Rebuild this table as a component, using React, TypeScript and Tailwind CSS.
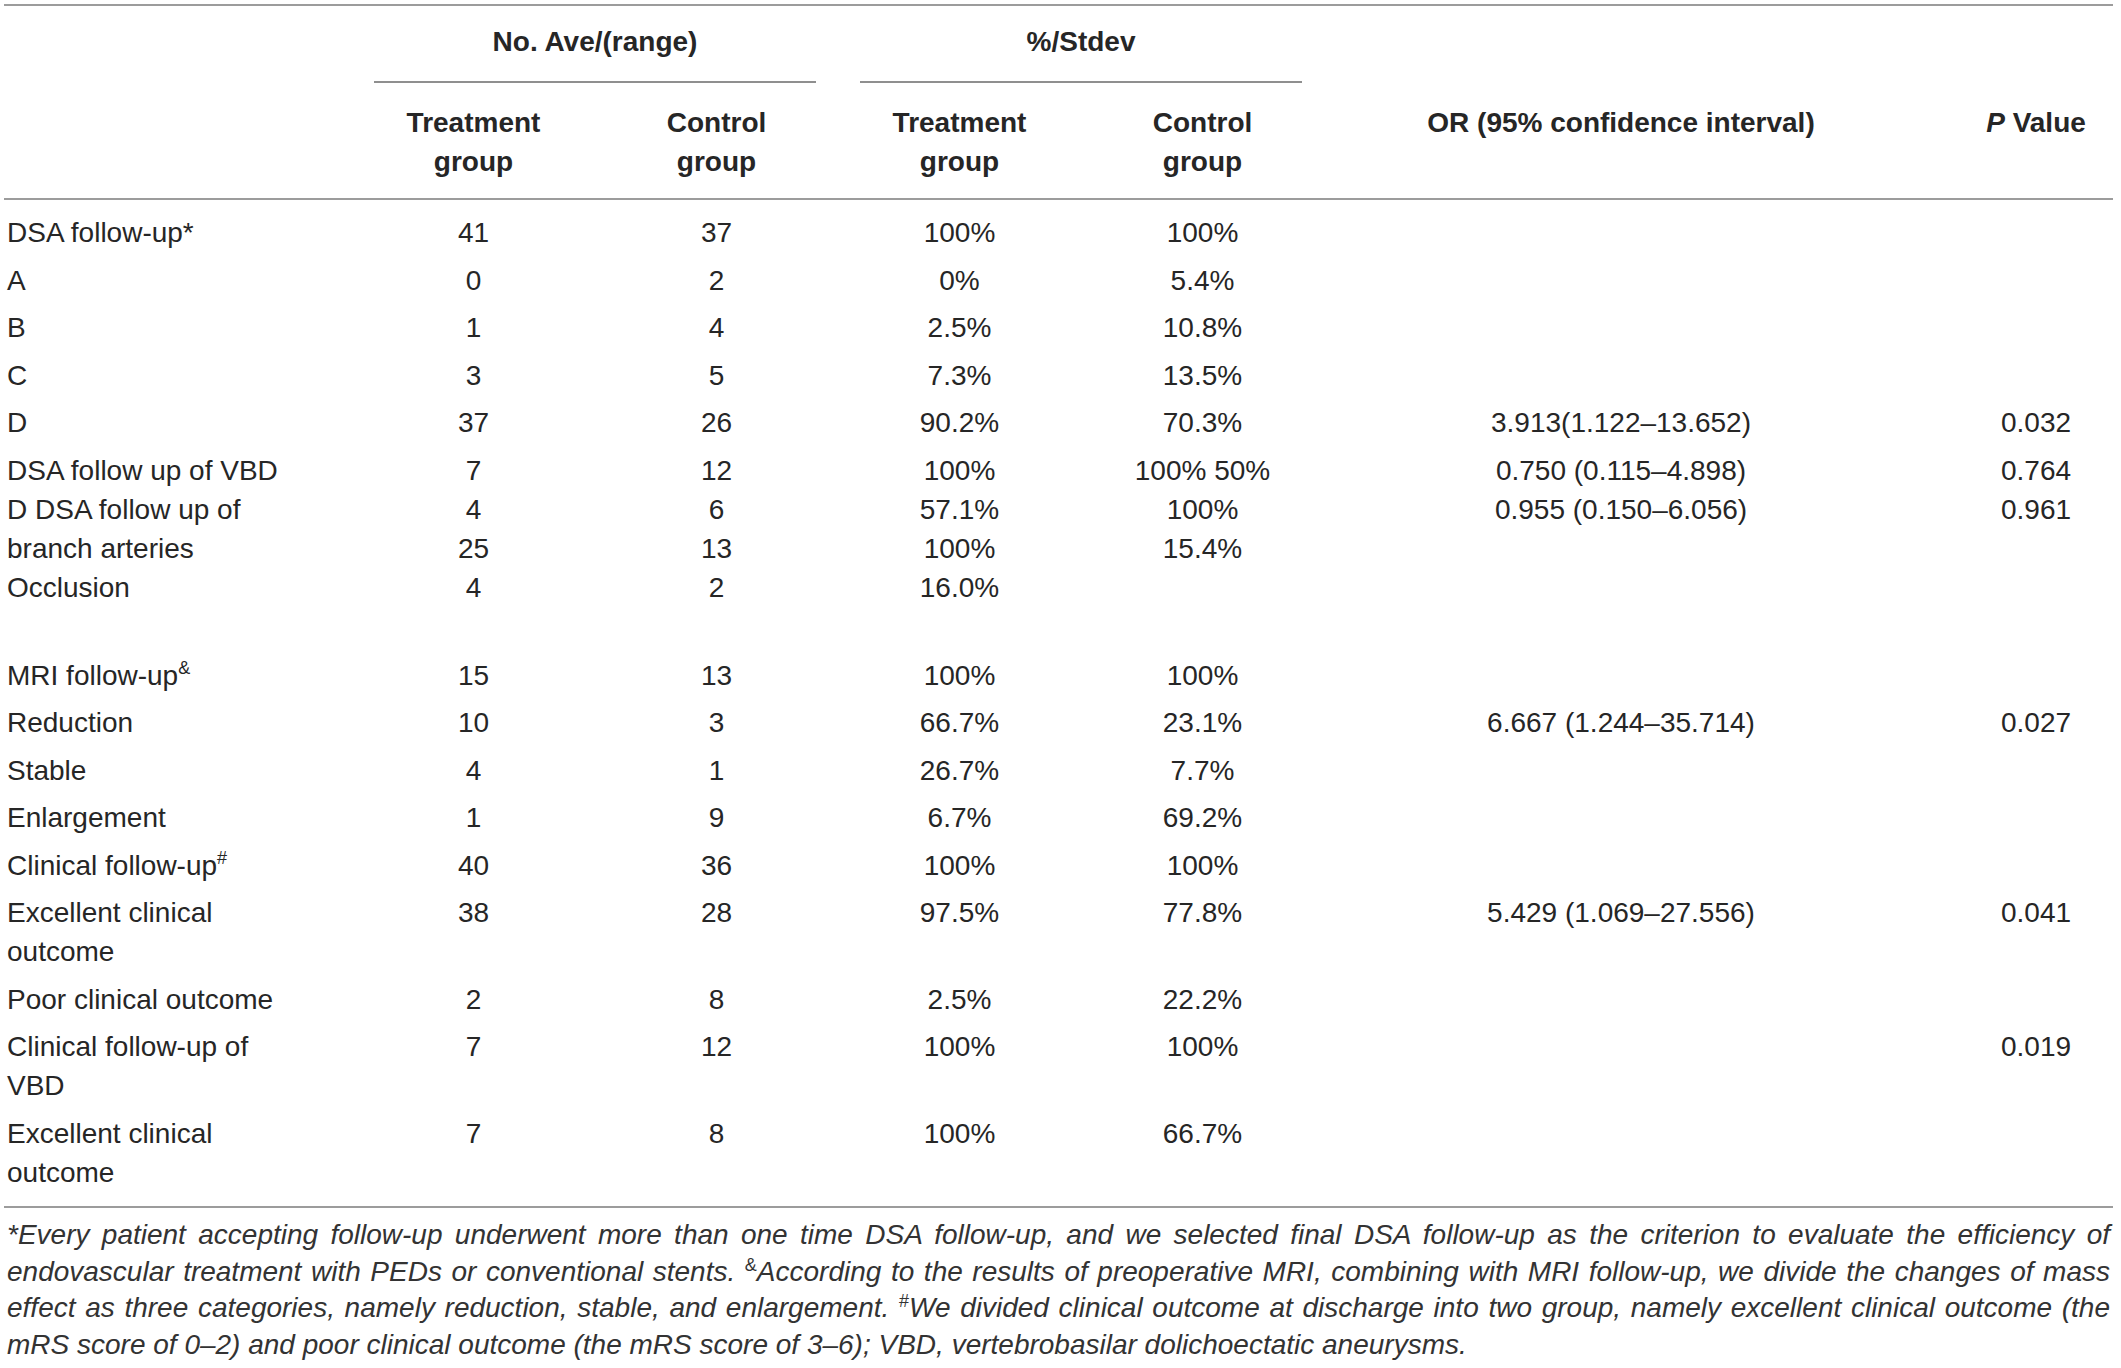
import React from "react"

type Row = {
  label: React.ReactNode
  cells: string[]
  or?: string
  p?: string
}

const grid = "grid grid-cols-[348px_243px_243px_243px_243px_594px_195px]"

const rowsTop: Row[] = [
  { label: "DSA follow-up*", cells: ["41", "37", "100%", "100%"] },
  { label: "A", cells: ["0", "2", "0%", "5.4%"] },
  { label: "B", cells: ["1", "4", "2.5%", "10.8%"] },
  { label: "C", cells: ["3", "5", "7.3%", "13.5%"] },
  { label: "D", cells: ["37", "26", "90.2%", "70.3%"], or: "3.913(1.122–13.652)", p: "0.032" },
]

const multi = {
  label: ["DSA follow up of VBD", "D DSA follow up of", "branch arteries", "Occlusion"],
  cols: [
    ["7", "4", "25", "4"],
    ["12", "6", "13", "2"],
    ["100%", "57.1%", "100%", "16.0%"],
    ["100% 50%", "100%", "15.4%", ""],
  ],
  or: ["0.750 (0.115–4.898)", "0.955 (0.150–6.056)", "", ""],
  p: ["0.764", "0.961", "", ""],
}

const sup = (s: string) => <sup className="text-[18px] relative -top-[11px]">{s}</sup>

const rowsBottom: Row[] = [
  { label: <>MRI follow-up{sup("&")}</>, cells: ["15", "13", "100%", "100%"] },
  { label: "Reduction", cells: ["10", "3", "66.7%", "23.1%"], or: "6.667 (1.244–35.714)", p: "0.027" },
  { label: "Stable", cells: ["4", "1", "26.7%", "7.7%"] },
  { label: "Enlargement", cells: ["1", "9", "6.7%", "69.2%"] },
  { label: <>Clinical follow-up{sup("#")}</>, cells: ["40", "36", "100%", "100%"] },
  { label: "Excellent clinical outcome", cells: ["38", "28", "97.5%", "77.8%"], or: "5.429 (1.069–27.556)", p: "0.041" },
  { label: "Poor clinical outcome", cells: ["2", "8", "2.5%", "22.2%"] },
  { label: "Clinical follow-up of VBD", cells: ["7", "12", "100%", "100%"], p: "0.019" },
  { label: "Excellent clinical outcome", cells: ["7", "8", "100%", "66.7%"] },
]

function BodyRow({ row }: { row: Row }) {
  return (
    <div className={`${grid} py-[4.25px]`}>
      <div className="pl-[3px] pr-[56px]">{row.label}</div>
      {row.cells.map((c, i) => (
        <div key={i} className="text-center">{c}</div>
      ))}
      <div className="text-center">{row.or ?? ""}</div>
      <div className="text-center pl-[41px]">{row.p ?? ""}</div>
    </div>
  )
}

function Lines({ items, className }: { items: string[]; className?: string }) {
  return (
    <div className={className}>
      {items.map((t, i) => (
        <div key={i} className="h-[39px]">{t}</div>
      ))}
    </div>
  )
}

const fsup = "text-[18px] not-italic relative -top-[10px]"

const footLines: React.ReactNode[] = [
  <>*Every patient accepting follow-up underwent more than one time DSA follow-up, and we selected final DSA follow-up as the criterion to evaluate the efficiency of</>,
  <>endovascular treatment with PEDs or conventional stents. <sup className={fsup}>&amp;</sup>According to the results of preoperative MRI, combining with MRI follow-up, we divide the changes of mass</>,
  <>effect as three categories, namely reduction, stable, and enlargement. <sup className={fsup}>#</sup>We divided clinical outcome at discharge into two group, namely excellent clinical outcome (the</>,
  <>mRS score of 0–2) and poor clinical outcome (the mRS score of 3–6); VBD, vertebrobasilar dolichoectatic aneurysms.</>,
]

export default function App() {
  return (
    <div className="w-[2121px] h-[1368px] bg-white overflow-hidden font-['Liberation_Sans',Arial,sans-serif] text-[#262626] text-[28px] leading-[39px]">
      <div className="ml-[4px] w-[2109px] pt-[4px]">
        {/* header */}
        <div className="border-t-2 border-[#9c9c9c]">
          <div className={`${grid} font-bold`}>
            <div />
            <div className="col-span-2 px-[22px]">
              <div className="text-center pt-[16px] pb-[20px] border-b-2 border-[#8f8f8f]">No. Ave/(range)</div>
            </div>
            <div className="col-span-2 px-[22px]">
              <div className="text-center pt-[16px] pb-[20px] border-b-2 border-[#8f8f8f]">%/Stdev</div>
            </div>
            <div />
            <div />
          </div>
          <div className={`${grid} font-bold pt-[20px] pb-[17px] border-b-2 border-[#9c9c9c]`}>
            <div />
            <div className="text-center">Treatment<br />group</div>
            <div className="text-center">Control<br />group</div>
            <div className="text-center">Treatment<br />group</div>
            <div className="text-center">Control<br />group</div>
            <div className="text-center">OR (95% confidence interval)</div>
            <div className="text-center pl-[41px]"><span className="italic">P</span> Value</div>
          </div>
        </div>

        {/* body */}
        <div className="pt-[9px] pb-[10px] border-b-2 border-[#9c9c9c]">
          {rowsTop.map((r, i) => (
            <BodyRow key={i} row={r} />
          ))}
          <div className={`${grid} pt-[4.25px] pb-[44.75px]`}>
            <Lines items={multi.label} className="pl-[3px]" />
            {multi.cols.map((c, i) => (
              <Lines key={i} items={c} className="text-center" />
            ))}
            <Lines items={multi.or} className="text-center" />
            <Lines items={multi.p} className="text-center pl-[41px]" />
          </div>
          {rowsBottom.map((r, i) => (
            <BodyRow key={i} row={r} />
          ))}
        </div>

        {/* footnote */}
        <div className="pt-[9px] px-[3px] italic text-[28px] leading-[36.5px] text-[#333]">
          {footLines.map((l, i) => (
            <div key={i} className={i < 3 ? "text-justify [text-align-last:justify]" : ""}>{l}</div>
          ))}
        </div>
      </div>
    </div>
  )
}
